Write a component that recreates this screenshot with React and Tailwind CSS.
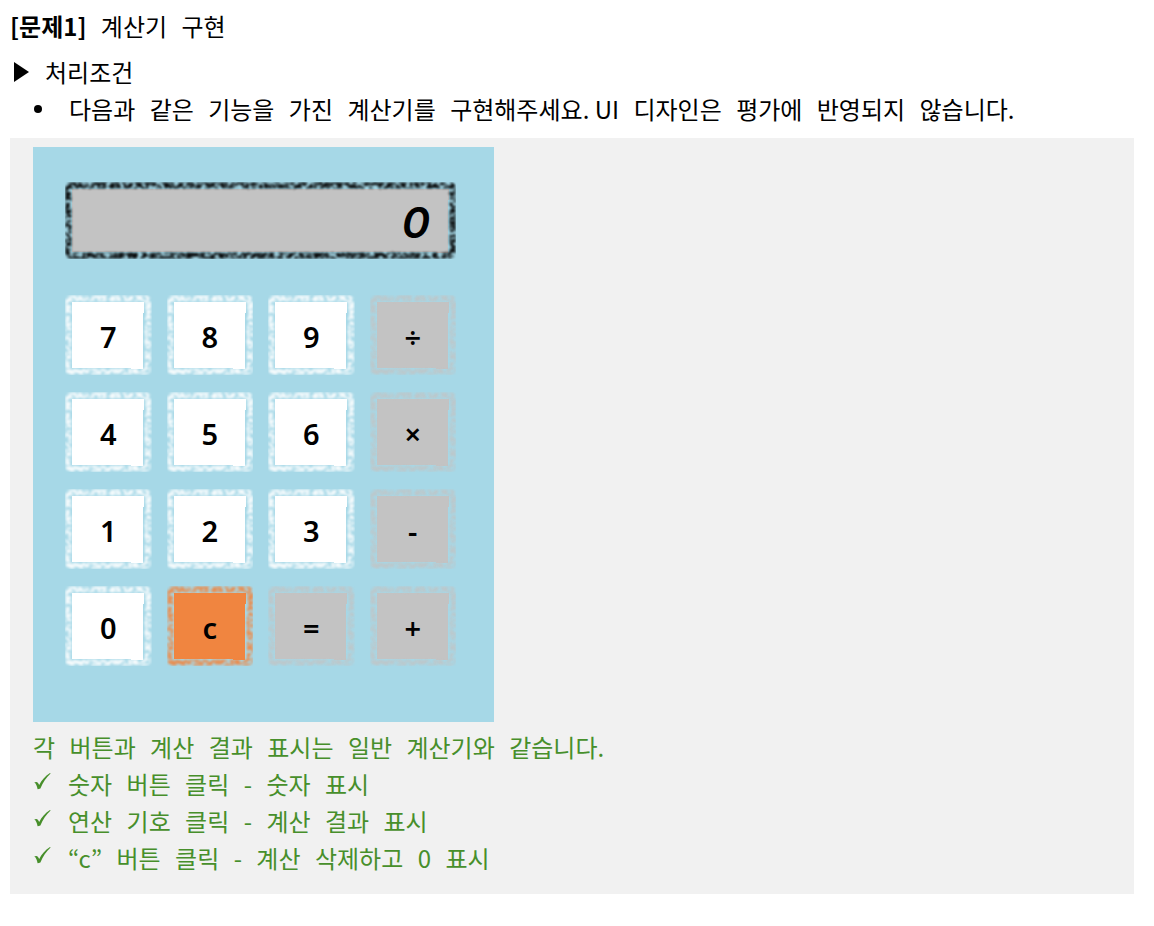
import { useState } from "react";

const KEYS = ["7", "8", "9", "÷", "4", "5", "6", "×", "1", "2", "3", "-", "0", "c", "=", "+"];
const OPERATORS = ["÷", "×", "-", "+"];

function compute(a, b, op) {
  if (op === "÷") return a / b;
  if (op === "×") return a * b;
  if (op === "-") return a - b;
  return a + b;
}

/* Proportional Latin text and punctuation inside the wide-spaced Korean text. */
function Latin({ children }) {
  return <span className="font-['Noto_Sans_CJK_KR',sans-serif] leading-none">{children}</span>;
}

/* Filter that breaks a solid stroke into a chalk-like texture. */
function ChalkFilter() {
  return (
    <svg className="absolute size-0" aria-hidden="true">
      <filter id="chalk" x="-5%" y="-5%" width="110%" height="110%" colorInterpolationFilters="sRGB">
        <feTurbulence type="fractalNoise" baseFrequency="0.22 0.28" numOctaves="2" seed="7" result="noise" />
        <feColorMatrix in="noise" type="matrix" values="0 0 0 0 0  0 0 0 0 0  0 0 0 0 0  4 0 0 0 -1.3" result="grain" />
        <feDisplacementMap in="SourceGraphic" in2="noise" scale="2" xChannelSelector="R" yChannelSelector="G" result="rough" />
        <feComposite in="rough" in2="grain" operator="in" result="chalk" />
        <feGaussianBlur in="chalk" stdDeviation="0.8" />
      </filter>
    </svg>
  );
}

function ChalkFrame({ width, height, stroke, fill, opacity }) {
  const r = width - 7;
  const b = height - 7;
  return (
    <svg
      className="absolute inset-0 size-full"
      viewBox={`0 0 ${width} ${height}`}
      preserveAspectRatio="none"
      aria-hidden="true"
    >
      <path d={`M7 7H${r}V18H${r - 1}V${b + 1}H${r - 13}V${b}H7Z`} fill={fill} shapeRendering="crispEdges" />
      <rect
        x="3.5"
        y="3.5"
        width={width - 7}
        height={height - 7}
        rx="2"
        fill="none"
        stroke={stroke}
        strokeWidth="6"
        opacity={opacity}
        filter="url(#chalk)"
      />
    </svg>
  );
}

function Key({ label, onPress }) {
  let color = "#ffffff";
  let opacity = 0.9;
  if (label === "c") {
    color = "#f08540";
  } else if (!/\d/.test(label)) {
    color = "#c3c3c3";
    opacity = 0.8;
  }
  return (
    <button
      type="button"
      onClick={() => onPress(label)}
      className="relative flex h-20 cursor-pointer items-center justify-center pt-[3px]"
    >
      <ChalkFrame width={86} height={80} stroke={color} fill={color} opacity={opacity} />
      <span className="relative font-['Noto_Sans',sans-serif] text-[29px] leading-8 font-semibold">{label}</span>
    </button>
  );
}

function Calculator() {
  const [display, setDisplay] = useState("0");
  const [stored, setStored] = useState(null);
  const [operator, setOperator] = useState(null);
  const [fresh, setFresh] = useState(true);

  function press(key) {
    if (key === "c") {
      setDisplay("0");
      setStored(null);
      setOperator(null);
      setFresh(true);
    } else if (OPERATORS.includes(key) || key === "=") {
      let value = Number(display);
      if (operator && !fresh) value = compute(stored, value, operator);
      setDisplay(String(value));
      setStored(value);
      setOperator(key === "=" ? null : key);
      setFresh(true);
    } else {
      setDisplay(fresh || display === "0" ? key : display + key);
      setFresh(false);
    }
  }

  return (
    <section aria-label="계산기" className="w-full max-w-[461px] bg-[#a6d8e7] pt-[35px] pr-[38px] pb-14 pl-8 text-black">
      <ChalkFilter />
      <output className="relative flex h-[77px] items-center justify-end overflow-hidden pt-[3px] pr-[26px]">
        <ChalkFrame width={391} height={77} stroke="#000000" fill="#c3c3c3" opacity={0.95} />
        <span className="relative font-['Inter',sans-serif] text-[43px] leading-[48px] font-semibold italic">
          {display}
        </span>
      </output>
      <div className="mt-9 grid grid-cols-4 gap-x-[15px] gap-y-[17px]">
        {KEYS.map((key) => (
          <Key key={key} label={key} onPress={press} />
        ))}
      </div>
    </section>
  );
}

function CheckItem({ children }) {
  return (
    <li className="flex">
      <svg viewBox="0 0 18 20" className="mt-1 mr-[17px] h-5 w-[18px] shrink-0" fill="#478f2b" aria-hidden="true">
        <path d="M1 9.8C2.4 8.6 4.2 8.6 5.2 10.2L6.2 12C8.6 7.4 12 3 17 0L17.6 0.6C13.2 4.6 9.8 9.8 7.4 15.6C6.4 16 5.4 16.2 4.6 16.2C4.2 14.2 3.6 12.4 2.9 11.2C2.4 10.2 1.8 9.8 1 9.8Z" />
      </svg>
      <span>{children}</span>
    </li>
  );
}

export default function App() {
  return (
    <main className="min-h-screen bg-white pt-[11px] pr-5 pb-8 pl-[10px] font-['Liberation_Mono','Noto_Sans_CJK_KR',monospace] text-2xl leading-[37px] text-black">
      <h1>
        <b className="font-['Noto_Sans_CJK_KR',sans-serif] leading-none font-bold">[문제1]</b> 계산기 구현
      </h1>
      <h2 className="mt-[9px] flex items-center">
        <svg viewBox="0 0 16 20" className="mr-[15px] mb-2 ml-1 h-5 w-4" aria-hidden="true">
          <path d="M0 0L15 10L0 20Z" />
        </svg>
        처리조건
      </h2>
      <ul>
        <li className="flex">
          <span className="mt-[11px] mr-[27px] ml-6 size-2 shrink-0 rounded-full bg-black" />
          <span>
            다음과 같은 기능을 가진 계산기를 구현해주세요<Latin>. UI</Latin> 디자인은 평가에 반영되지 않습니다<Latin>.</Latin>
          </span>
        </li>
      </ul>
      <div className="mt-[7px] bg-[#f1f1f1] px-[23px] pt-[9px] pb-[14px] text-[#478f2b]">
        <Calculator />
        <p className="mt-[10px]">
          각 버튼과 계산 결과 표시는 일반 계산기와 같습니다<Latin>.</Latin>
        </p>
        <ul>
          <CheckItem>
            숫자 버튼 클릭 <Latin>-</Latin> 숫자 표시
          </CheckItem>
          <CheckItem>
            연산 기호 클릭 <Latin>-</Latin> 계산 결과 표시
          </CheckItem>
          <CheckItem>
            <Latin>“c”</Latin> 버튼 클릭 <Latin>-</Latin> 계산 삭제하고 <Latin>0</Latin> 표시
          </CheckItem>
        </ul>
      </div>
    </main>
  );
}
